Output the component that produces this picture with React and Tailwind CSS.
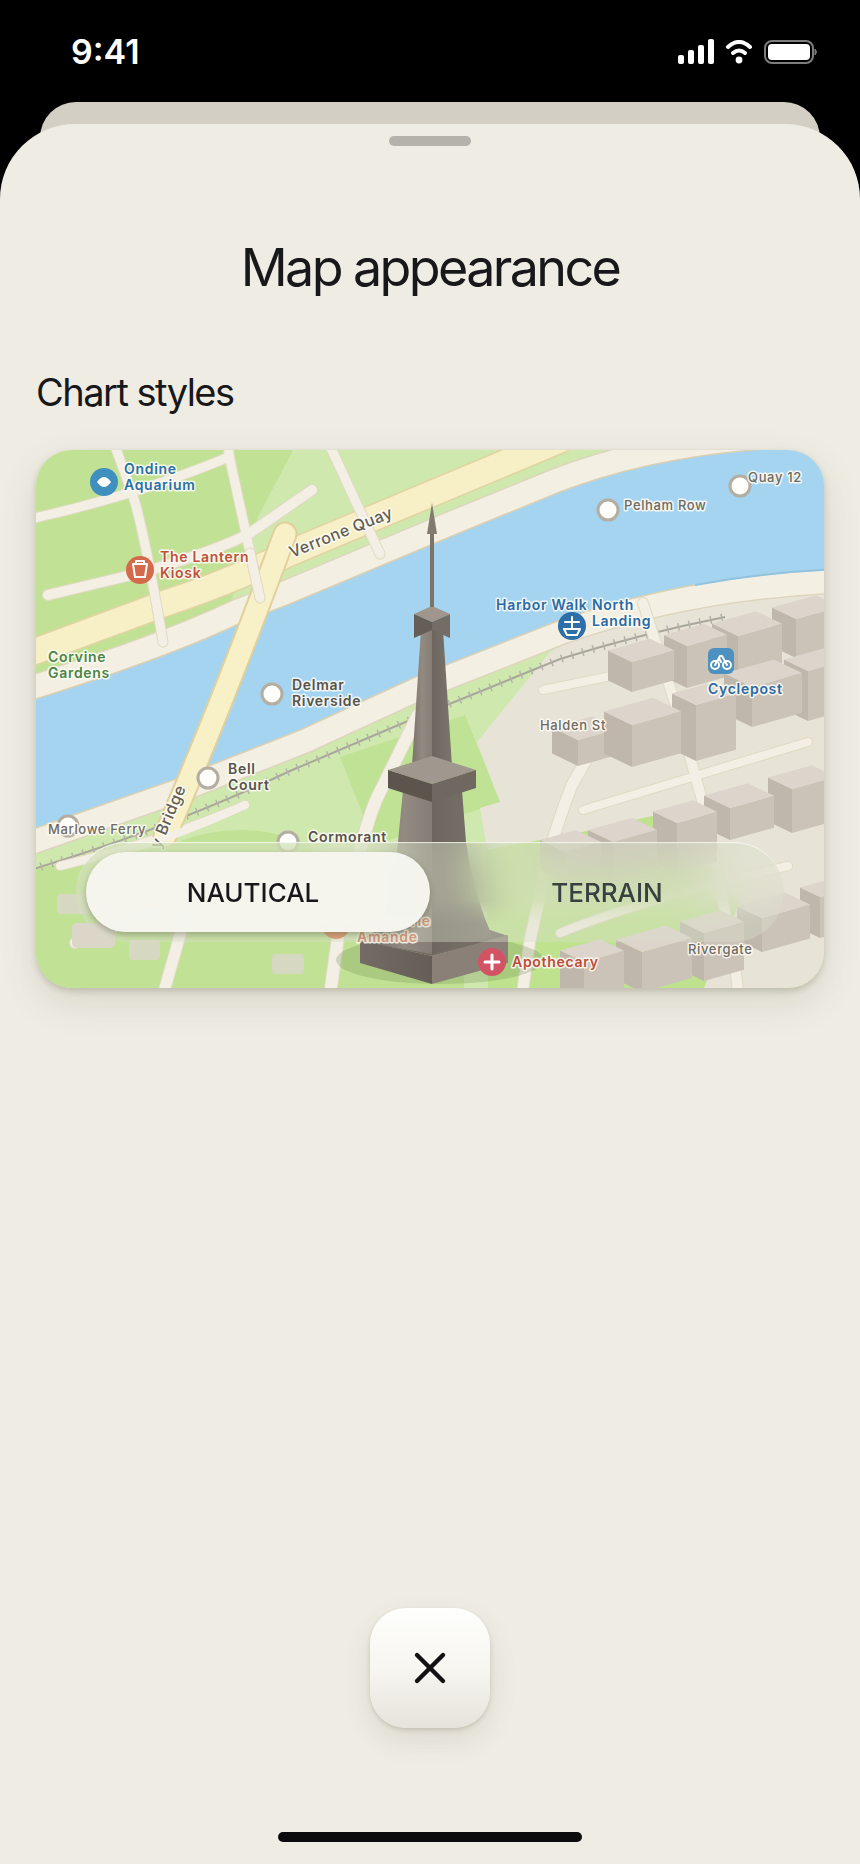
import React, { useState } from 'react';
import { X } from 'lucide-react';

const FONT = 'font-[Inter,sans-serif]';

// x, y = nearest top corner; l / r = how far the two faces run; h = height
const BUILDINGS = [
  { x: 796, y: 619, l: 24, r: 44, h: 39 },
  { x: 738, y: 636, l: 26, r: 44, h: 46 },
  { x: 687, y: 646, l: 23, r: 40, h: 42 },
  { x: 632, y: 662, l: 24, r: 42, h: 30 },
  { x: 808, y: 671, l: 24, r: 44, h: 50 },
  { x: 752, y: 687, l: 28, r: 50, h: 40 },
  { x: 696, y: 705, l: 24, r: 40, h: 56 },
  { x: 578, y: 740, l: 26, r: 40, h: 26 },
  { x: 632, y: 725, l: 28, r: 49, h: 42 },
  { x: 792, y: 789, l: 24, r: 44, h: 44 },
  { x: 730, y: 808, l: 26, r: 44, h: 32 },
  { x: 677, y: 823, l: 24, r: 40, h: 50 },
  { x: 613, y: 842, l: 25, r: 44, h: 40 },
  { x: 565, y: 852, l: 25, r: 36, h: 30 },
  { x: 820, y: 897, l: 20, r: 40, h: 41 },
  { x: 762, y: 918, l: 25, r: 48, h: 34 },
  { x: 704, y: 933, l: 24, r: 40, h: 48 },
  { x: 642, y: 952, l: 26, r: 50, h: 40 },
  { x: 584, y: 962, l: 24, r: 40, h: 40 },
];

const STREETS = [
  { d: 'M30 519 Q135 496 229 457', w: 9 },
  { d: 'M115 446 L133 496 Q144 530 163 642', w: 9 },
  { d: 'M228 446 L230 460 L260 598', w: 9 },
  { d: 'M48 595 L140 573 Q220 550 250 533 L312 490', w: 10 },
  { d: 'M330 446 L380 554', w: 9 },
  { d: 'M60 866 Q160 842 245 805', w: 8 },
  { d: 'M75 943 L190 897', w: 10 },
  { d: 'M190 900 L163 995', w: 11 },
  { d: 'M418 715 L376 800 Q368 820 360 850 L339 930 L330 995', w: 12 },
  { d: 'M600 735 L572 785 Q560 815 550 850 L530 940 L522 995', w: 11 },
  { d: 'M583 810 L808 742', w: 8 },
  { d: 'M643 603 L675 703 L702 800 L735 960 L738 995', w: 10 },
  { d: 'M560 933 Q640 900 788 866', w: 8 },
  { d: 'M543 690 L640 670', w: 8 },
];

const LABELS = [
  { x: 124, y: 474, lines: ['Ondine', 'Aquarium'], fill: '#2a70a8' },
  { x: 160, y: 562, lines: ['The Lantern', 'Kiosk'], fill: '#c0503a' },
  { x: 48, y: 662, lines: ['Corvine', 'Gardens'], fill: '#4b8644' },
  { x: 292, y: 690, lines: ['Delmar', 'Riverside'], fill: '#57534b' },
  { x: 228, y: 774, lines: ['Bell', 'Court'], fill: '#57534b' },
  { x: 308, y: 842, lines: ['Cormorant'], fill: '#57534b' },
  { x: 496, y: 610, lines: ['Harbor Walk'], fill: '#2a6aa5' },
  { x: 592, y: 610, lines: ['North', 'Landing'], fill: '#2a6aa5' },
  { x: 708, y: 694, lines: ['Cyclepost'], fill: '#2a6aa5' },
  { x: 357, y: 926, lines: ['Patisserie', 'Amande'], fill: '#c8683f' },
  { x: 512, y: 967, lines: ['Apothecary'], fill: '#bd4c3a' },
];

const SMALL_LABELS = [
  { x: 624, y: 510, text: 'Pelham Row' },
  { x: 748, y: 482, text: 'Quay 12' },
  { x: 540, y: 730, text: 'Halden St' },
  { x: 688, y: 954, text: 'Rivergate' },
  { x: 48, y: 834, text: 'Marlowe Ferry' },
];

const STOPS = [
  [608, 510],
  [740, 486],
  [272, 694],
  [208, 778],
  [68, 826],
  [288, 842],
];

const NORTH_BANK = 'M20 705 L36 699 Q170 657 243 622 L290 604 L457 534 L560 492 Q646 459 753 450 L840 442';
const SOUTH_BANK = 'M20 834 L36 828 L173 780 L300 730 L413 678 L560 620 Q690 575 840 569';
const WATER = `${NORTH_BANK} L840 569 Q690 575 560 620 L413 678 L300 730 L173 780 L36 828 L20 834 Z`;
const QUAY = 'M20 656 L36 651 L163 604 Q230 582 290 553 L390 511 L560 440';
const RAIL = 'M30 870 Q170 828 290 771 L415 718 L560 659 Q640 634 725 617';

const Building = ({ x, y, l, r, h }) => {
  const ly = y - l * 0.48;
  const ry = y - r * 0.28;
  return (
    <g>
      <path d={`M${x} ${y} L${x - l} ${ly} L${x - l} ${ly + h} L${x} ${y + h} Z`} fill="#bfb7ab" />
      <path d={`M${x} ${y} L${x + r} ${ry} L${x + r} ${ry + h} L${x} ${y + h} Z`} fill="#cbc2b8" />
      <path d={`M${x} ${y} L${x - l} ${ly} L${x + r - l} ${ry - l * 0.48} L${x + r} ${ry} Z`} fill="#ddd4cc" />
    </g>
  );
};

const Tower = () => (
  <g>
    <ellipse cx="440" cy="960" rx="104" ry="24" fill="#5f7d48" opacity="0.24" />
    {/* Base */}
    <path d="M360 940 L378 930 L490 930 L508 936 L432 956 Z" fill="#746d66" />
    <path d="M360 940 L432 956 L432 984 L360 963 Z" fill="url(#baseLeft)" />
    <path d="M432 956 L508 935 L508 963 L432 984 Z" fill="#8a8078" />
    {/* Lower shaft */}
    <path d="M403 790 L398 842 Q394 890 376 944 L432 954 L432 790 Z" fill="url(#shaftLeft)" />
    <path d="M462 790 L466 842 Q472 890 492 936 L432 954 L432 790 Z" fill="url(#shaftRight)" />
    {/* Upper shaft */}
    <path d="M421 630 L412 766 L432 770 L432 630 Z" fill="url(#shaftLeft)" />
    <path d="M443 630 L452 766 L432 770 L432 630 Z" fill="url(#shaftRight)" />
    {/* Platform */}
    <path d="M432 756 L476 770 L432 784 L388 770 Z" fill="#a0988f" />
    <path d="M388 770 L432 784 L432 802 L388 788 Z" fill="#5c554e" />
    <path d="M476 770 L432 784 L432 802 L476 788 Z" fill="#6f6861" />
    {/* Lantern */}
    <path d="M432 606 L450 614 L432 622 L414 614 Z" fill="#a0968d" />
    <path d="M414 614 L432 622 L432 630 L414 638 Z" fill="#655e57" />
    <path d="M450 614 L432 622 L432 630 L450 638 Z" fill="#746d65" />
    {/* Spire */}
    <path d="M430 534 H434 V607 H430 Z" fill="#7b746b" />
    <path d="M432 503 L437 534 H427 Z" fill="#827a71" />
  </g>
);

const CityMap = () => (
  <svg viewBox="36 450 788 538" className="block h-auto w-full" role="img" aria-label="Nautical chart preview">
    <defs>
      <linearGradient id="shaftLeft">
        <stop offset="0" stopColor="#7b736b" />
        <stop offset="0.5" stopColor="#938a82" />
        <stop offset="1" stopColor="#857d75" />
      </linearGradient>
      <linearGradient id="shaftRight">
        <stop offset="0" stopColor="#6d665e" />
        <stop offset="1" stopColor="#7c756c" />
      </linearGradient>
      <linearGradient id="baseLeft">
        <stop offset="0" stopColor="#736b64" />
        <stop offset="1" stopColor="#655e57" />
      </linearGradient>
    </defs>

    {/* Land */}
    <rect x="36" y="450" width="788" height="538" fill="#c1e295" />
    <path d="M293 450 H824 V620 H225 L258 517 Z" fill="#cfe8ae" />
    <path d="M36 850 L260 760 L560 630 L560 988 H300 L270 860 L170 850 L36 880 Z" fill="#cfe8ae" />
    <path d="M36 868 L170 845 Q240 815 310 845 L345 988 H36 Z" fill="#c1e295" />
    <path d="M340 757 L465 715 L500 802 L375 845 Z" fill="#c0e295" />
    <path d="M300 940 H560 V988 H300 Z" fill="#c1e295" />
    <path d="M550 652 L477 742 L500 802 L480 808 L487 850 L583 832 L652 816 L740 900 L700 988 H824 V560 L640 600 Z" fill="#e7e4d7" />
    <path d="M487 850 L583 832 L652 816 L740 900 L704 988 H487 Z" fill="#bfe28f" />

    {/* Garden plots */}
    <g fill="#d7d8c2">
      <rect x="57" y="894" width="34" height="20" rx="4" />
      <rect x="129" y="940" width="31" height="20" rx="4" />
      <rect x="272" y="954" width="32" height="20" rx="4" />
      <rect x="464" y="970" width="24" height="18" fill="#cfe8ae" />
    </g>

    {/* River and promenades */}
    <g fill="none">
      <path d={NORTH_BANK} stroke="#ddd5bd" strokeWidth="50" />
      <path d={NORTH_BANK} stroke="#f4efe3" strokeWidth="47" />
      <path d={SOUTH_BANK} stroke="#ddd5bd" strokeWidth="50" />
      <path d={SOUTH_BANK} stroke="#f4efe3" strokeWidth="47" />
    </g>
    <path d={WATER} fill="#a4d4f0" stroke="#d9d0b4" strokeWidth="1.5" />
    <path d="M695 585 Q765 572 840 569" fill="none" stroke="#8fc3e2" strokeWidth="2" />

    {/* Quay road */}
    <g fill="none" strokeLinecap="round">
      <path d={QUAY} stroke="#e2d3a2" strokeWidth="28" />
      <path d={QUAY} stroke="#f7efc6" strokeWidth="25" />
    </g>

    {/* Railway */}
    <g fill="none">
      <path d={RAIL} stroke="#a9a69b" strokeWidth="2" />
      <path d={RAIL} stroke="#b4b2a8" strokeWidth="8" strokeDasharray="1.5 9.5" />
    </g>

    {/* Streets */}
    <g fill="none" strokeLinecap="round" strokeLinejoin="round">
      {STREETS.map((s) => (
        <path key={s.d} d={s.d} stroke="#e0d9c4" strokeWidth={s.w + 2} />
      ))}
      {STREETS.map((s) => (
        <path key={s.d} d={s.d} stroke="#f4efe4" strokeWidth={s.w} />
      ))}
    </g>
    <rect x="72" y="923" width="43" height="25" rx="5" fill="#dbd6c8" />

    {/* Bridge */}
    <g fill="none" strokeLinecap="round" strokeLinejoin="round">
      <path d="M285 534 Q220 710 165 836" stroke="#e0d09c" strokeWidth="25" />
      <path d="M285 534 Q220 710 165 836" stroke="#f8f0c6" strokeWidth="21" />
      <path d="M250 553 L260 598" stroke="#e0d9c4" strokeWidth="11" />
      <path d="M250 553 L260 598" stroke="#f4efe4" strokeWidth="9" />
      <path d="M110 854 Q170 840 245 805" stroke="#f4efe4" strokeWidth="8" />
    </g>

    {BUILDINGS.map((b) => (
      <Building key={`${b.x}-${b.y}`} {...b} />
    ))}
    <Tower />

    {/* Transit stops */}
    {STOPS.map(([x, y]) => (
      <circle key={`${x}-${y}`} cx={x} cy={y} r="10" fill="#fffefa" stroke="#b3ada2" strokeWidth="3" />
    ))}

    {/* Places */}
    <circle cx="104" cy="482" r="14" fill="#3f8fbf" />
    <path d="M97 482 Q104 472 111 482 Q104 492 97 482 Z" fill="#fff" />
    <circle cx="140" cy="570" r="14" fill="#d5694b" />
    <g fill="none" stroke="#fff" strokeWidth="2" strokeLinejoin="round">
      <path d="M133 564 H147 L145 577 H135 Z M136 564 V561 H144 V564" />
    </g>
    <circle cx="572" cy="626" r="14" fill="#2f6fa8" />
    <g fill="none" stroke="#fff" strokeWidth="2" strokeLinecap="round" strokeLinejoin="round">
      <path d="M572 617 V628 M565 622 H579 M564 629 H580 L577 635 H567 Z" />
    </g>
    <rect x="708" y="648" width="26" height="26" rx="6" fill="#4c91c0" />
    <g fill="none" stroke="#fff" strokeWidth="2" strokeLinecap="round" strokeLinejoin="round">
      <circle cx="715" cy="665" r="4" />
      <circle cx="727" cy="665" r="4" />
      <path d="M715 665 L720 656 L722 656 L727 665 M719 658 L721 662" />
    </g>
    <circle cx="336" cy="925" r="14" fill="#df7f4a" />
    <path d="M331 932 V925 L336 929 L341 925 V932" fill="none" stroke="#fff" strokeWidth="2" />
    <circle cx="492" cy="962" r="14" fill="#d15364" />
    <path d="M492 955 V969 M485 962 H499" stroke="#fff" strokeWidth="3" strokeLinecap="round" />

    {/* Names */}
    <g className={FONT} stroke="#fffdf6" strokeOpacity="0.85" strokeWidth="3" strokeLinejoin="round" paintOrder="stroke">
      <g className="text-[14px] font-semibold tracking-wider">
        {LABELS.map((label) =>
          label.lines.map((line, i) => (
            <text key={line} x={label.x} y={label.y + i * 16} fill={label.fill}>
              {line}
            </text>
          ))
        )}
      </g>
      <g className="text-[13px] font-medium tracking-wider" fill="#6e6a61">
        {SMALL_LABELS.map((label) => (
          <text key={label.text} x={label.x} y={label.y}>
            {label.text}
          </text>
        ))}
      </g>
      <g className="text-[16px] font-medium tracking-wide" fill="#625e55">
        <text transform="translate(292 558) rotate(-22)">Verrone Quay</text>
        <text transform="translate(186 788) rotate(-67)" textAnchor="end">
          y Bridge
        </text>
      </g>
    </g>
  </svg>
);

const StatusBar = () => (
  <header className="flex h-[102px] items-center justify-between pl-[71px] pr-[41px] pt-[2px] text-white">
    <span className="text-[34px] font-semibold leading-10">9:41</span>
    <div className="flex items-center gap-[10px]">
      <svg width="37" height="26" viewBox="0 0 37 26" fill="currentColor">
        <rect x="0" y="16" width="6" height="9" rx="2" />
        <rect x="10" y="11" width="6" height="14" rx="2" />
        <rect x="20" y="6" width="6" height="19" rx="2" />
        <rect x="30" y="0" width="6" height="25" rx="2" />
      </svg>
      <svg width="28" height="24" viewBox="0 0 28 24" fill="none" stroke="currentColor" strokeLinecap="round">
        <path d="M3 7 Q14 -3 25 7" strokeWidth="4" />
        <path d="M8 13 Q14 8 20 13" strokeWidth="4" />
        <circle cx="14" cy="20" r="3.4" fill="currentColor" stroke="none" />
      </svg>
      <svg width="56" height="26" viewBox="0 0 56 26">
        <rect x="2" y="2" width="48" height="22" rx="7" fill="none" stroke="#7d7d7d" strokeWidth="2" />
        <rect x="5" y="5" width="42" height="16" rx="4" fill="currentColor" />
        <path d="M52 10 Q55 13 52 16 Z" fill="#7d7d7d" stroke="#7d7d7d" />
      </svg>
    </div>
  </header>
);

const StyleSwitch = ({ value, onChange }) => (
  <div className="absolute inset-x-10 bottom-[46px] grid h-[100px] grid-cols-2">
    {/* Frosted layer, clearer towards the lower edge */}
    <div className="absolute inset-x-0 top-0 h-[84px] overflow-hidden rounded-t-[50px] rounded-b-[34px] backdrop-blur-xl [mask-image:linear-gradient(to_bottom,black_70%,transparent)]" />
    <div className="absolute inset-0 rounded-full bg-[#d9dfca]/40 shadow-[inset_0_2px_1px_-1px_rgba(255,255,255,0.75)]" />
    {['Nautical', 'Terrain'].map((name) => {
      const active = value === name;
      return (
        <button
          key={name}
          type="button"
          aria-pressed={active}
          onClick={() => onChange(name)}
          className="relative flex items-center justify-center pt-[2px] text-[26px] font-medium uppercase leading-8"
        >
          {active && (
            <span
              className={
                name === 'Nautical'
                  ? 'absolute inset-y-[10px] left-[10px] right-0 rounded-full bg-[#f5f5f0]/98 shadow-[0_3px_6px_rgba(60,60,40,0.35)]'
                  : 'absolute inset-y-[10px] left-0 right-[10px] rounded-full bg-[#f5f5f0]/98 shadow-[0_3px_6px_rgba(60,60,40,0.35)]'
              }
            />
          )}
          <span className={active ? 'relative text-[#18181a]' : 'relative text-[#384040]'}>{name}</span>
        </button>
      );
    })}
  </div>
);

const App = () => {
  const [style, setStyle] = useState('Nautical');

  return (
    <div className={`flex min-h-screen flex-col bg-black text-[#18181b] ${FONT}`}>
      <StatusBar />

      {/* Sheet underneath */}
      <div className="mx-10 h-16 rounded-t-[36px] bg-[#d3cfc4]" />

      <main className="relative -mt-[42px] flex flex-1 flex-col rounded-t-[75px] bg-[#efece4] px-9 pb-[22px]">
        <div className="mx-auto mt-3 h-[10px] w-[82px] rounded-full bg-[#b5b2ab]" />

        <h1 className="mt-[90px] text-center text-[52px] leading-[64px] tracking-tighter">Map appearance</h1>

        <section>
          <h2 className="mt-[68px] text-[38px] leading-[48px] tracking-[-0.04em]">Chart styles</h2>
          <div className="relative mt-[34px] overflow-hidden rounded-[36px] shadow-[0_3px_6px_rgba(70,65,40,0.2),0_14px_36px_rgba(90,85,50,0.15)]">
            <CityMap />
            <StyleSwitch value={style} onChange={setStyle} />
          </div>
        </section>

        <button
          type="button"
          aria-label="Close"
          className="mx-auto mb-[104px] mt-auto flex size-[120px] items-center justify-center rounded-[36px] bg-linear-to-b from-[#fefefc] via-[#f7f6f1] to-[#e6e3db] text-[#121212] shadow-[0_2px_4px_rgba(70,65,40,0.18),0_12px_28px_rgba(90,85,50,0.12)]"
        >
          <X size={52} strokeWidth={2} />
        </button>
        <div className="mx-auto h-[10px] w-[304px] rounded-full bg-[#0b0b0d]" />
      </main>
    </div>
  );
};

export default App;
